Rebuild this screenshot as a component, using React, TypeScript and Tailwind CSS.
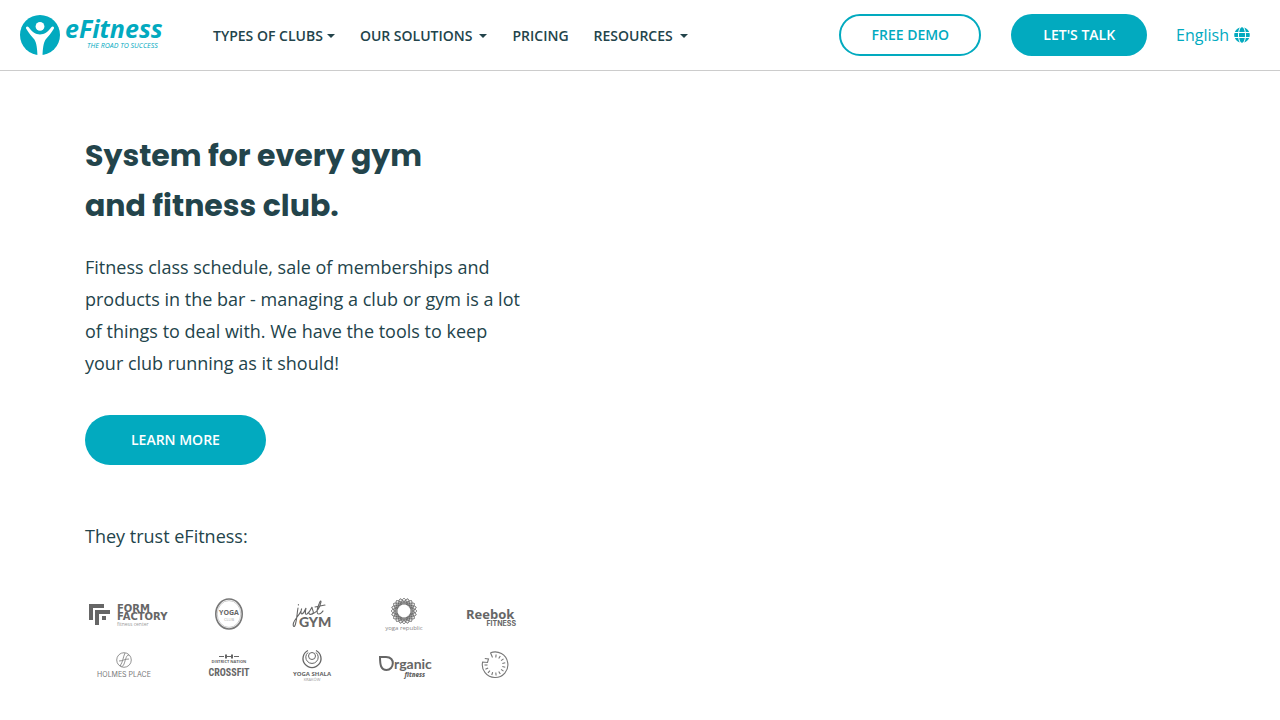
import { ReactNode } from 'react'
import { clsx } from 'clsx'
import { FaGlobe } from 'react-icons/fa'

// ─── Brand ────────────────────────────────────────────────────────────────────
function BrandLogo() {
  return (
    <svg viewBox="0 0 148 50" className="w-[148px] h-[50px]" role="img" aria-label="eFitness">
      <circle cx="20" cy="25" r="20" fill="#02aabf" />
      <circle cx="20" cy="16.4" r="4.4" fill="#fff" />
      <path
        d="M6.2 18.8C5.2 17 7.2 15.6 8.7 17.2C12.4 22.4 15.6 24.4 20 24.4C24.4 24.4 27.6 22.4 31.3 17.2C32.8 15.6 34.8 17 33.8 18.8C31.4 23 28 26.8 25.6 29.6C23.4 33 22.8 39 22.5 46H17.5C17.2 39 16.6 33 14.4 29.6C12 26.8 8.6 23 6.2 18.8Z"
        fill="#fff"
      />
      <text x="45" y="28" fill="#02aabf" fontSize="25" fontWeight="700" fontStyle="italic" fontFamily="'Open Sans', sans-serif">eFitness</text>
      <text x="67" y="38" fill="#02aabf" fontSize="7" fontStyle="italic" fontFamily="'Open Sans', sans-serif">THE ROAD TO SUCCESS</text>
    </svg>
  )
}

// ─── Header ───────────────────────────────────────────────────────────────────
interface NavItem {
  label: string
  menu?: boolean
  spaced?: boolean
}

const navItems: NavItem[] = [
  { label: 'TYPES OF CLUBS', menu: true },
  { label: 'OUR SOLUTIONS', menu: true, spaced: true },
  { label: 'PRICING' },
  { label: 'RESOURCES', menu: true, spaced: true },
]

function Caret({ className }: { className?: string }) {
  return (
    <svg viewBox="0 0 8 4" className={clsx('w-2 h-1', className)} aria-hidden="true">
      <path d="M0 0H8L4 4Z" fill="currentColor" />
    </svg>
  )
}

function Header() {
  return (
    <header className="flex items-center h-[71px] pl-5 pr-[30px] border-b border-[#cccccc]">
      <a href="#home"><BrandLogo /></a>
      <nav className="flex items-center gap-[25px] ml-[45px] pt-0.5 text-sm font-semibold text-[#23444b]">
        {navItems.map(({ label, menu, spaced }) =>
          menu ? (
            <button key={label} type="button" className="flex items-center whitespace-nowrap cursor-pointer">
              {label}
              <Caret className={spaced ? 'ml-[7px]' : 'ml-1'} />
            </button>
          ) : (
            <a key={label} href="#pricing">{label}</a>
          )
        )}
      </nav>
      <div className="flex items-center ml-auto text-sm font-semibold whitespace-nowrap">
        <a href="#demo" className="flex items-center justify-center w-[142px] h-[42px] border-2 border-[#02aabf] rounded-full text-[#02aabf]">
          FREE DEMO
        </a>
        <a href="#contact" className="flex items-center h-[42px] ml-[30px] px-8 bg-[#02aabf] rounded-full text-white">
          LET'S TALK
        </a>
        <button type="button" className="flex items-center gap-[5px] ml-[29px] text-base font-normal text-[#02aabf] cursor-pointer">
          English
          <FaGlobe className="w-4 h-4" />
        </button>
      </div>
    </header>
  )
}

// ─── Client logos ─────────────────────────────────────────────────────────────
function ClientLogo({ name, className, width, height, children }: {
  name: string; className: string; width: number; height: number; children: ReactNode
}) {
  return (
    <svg viewBox={`0 0 ${width} ${height}`} className={className} role="img" aria-label={name} fill="#666666" fontFamily="'Open Sans', sans-serif">
      {children}
    </svg>
  )
}

function FormFactory() {
  return (
    <ClientLogo name="Form Factory" className="w-[90px] h-8" width={90} height={32}>
      <path d="M3 6H18V10H7V22H3Z M9 12H24V16H13V27H9Z M16 18H20V22H16Z" />
      <g fontSize="10" fontWeight="700" fontFamily="'DejaVu Sans', sans-serif">
        <text x="31" y="14">FORM</text>
        <text x="31" y="22">FACTORY</text>
      </g>
      <text x="31" y="28" fontSize="5" fill="#999999">fitness center</text>
    </ClientLogo>
  )
}

function YogaClub() {
  return (
    <ClientLogo name="Yoga club" className="w-8 h-[34px]" width={32} height={34}>
      <ellipse cx="16" cy="17" rx="13.2" ry="15" fill="none" stroke="#777777" strokeWidth="1.6" />
      <ellipse cx="16" cy="17" rx="11.8" ry="13.4" fill="none" stroke="#aaaaaa" strokeWidth="0.6" />
      <text x="16" y="18" fontSize="7" fontWeight="700" textAnchor="middle">YOGA</text>
      <text x="16" y="24" fontSize="4" fill="#aaaaaa" textAnchor="middle">CLUB</text>
    </ClientLogo>
  )
}

function JustGym() {
  return (
    <ClientLogo name="just GYM" className="w-10 h-8" width={40} height={32}>
      <g fill="none" stroke="#666666" strokeWidth="1.1" strokeLinecap="round">
        <path d="M6 10C5 15 5 21 3.5 26C2.5 30 .5 29 1.5 25C2.5 21 7 18 9 13C10 10 9.5 10 9 13C8.5 17 11 17 13 12L14 10C13 15 13 17 15 16C18 14 19 11 20 9C20 12 23 15 20 16C18 17 17 16 17 15" />
        <path d="M20 16C26 14 28 9 29 4C29 2 28 3 27 6C25 11 24 16 27 16C29 16 30 14 31 13M23 9L33 7M6.4 6.5V7" />
      </g>
      <text x="7" y="29" fontSize="14" fontWeight="900" fontFamily="Lato, sans-serif">GYM</text>
    </ClientLogo>
  )
}

const petals = Array.from({ length: 20 }, (_, i) => i * 18)

function YogaRepublic() {
  return (
    <ClientLogo name="yoga republic" className="w-[42px] h-[34px]" width={42} height={34}>
      <g fill="none" stroke="#666666" strokeWidth="0.9">
        {petals.map(angle => (
          <g key={angle} transform={`rotate(${angle} 21 14)`}>
            <path d="M21 7.5C17.5 5 19 2.5 21 1.2C23 2.5 24.5 5 21 7.5Z" />
            <path d="M21 6.4V3.4" strokeWidth="1.2" />
          </g>
        ))}
      </g>
      <text x="21" y="33" fontSize="6" textAnchor="middle" fill="#888888">yoga republic</text>
    </ClientLogo>
  )
}

function Reebok() {
  return (
    <ClientLogo name="Reebok Fitness" className="w-[52px] h-7" width={52} height={28}>
      <text x="1" y="19" fontSize="13" fontWeight="700">Reebok</text>
      <text x="51" y="26" fontSize="7" fontWeight="700" fontFamily="Inter, sans-serif" textAnchor="end">FITNESS</text>
    </ClientLogo>
  )
}

function HolmesPlace() {
  return (
    <ClientLogo name="Holmes Place" className="w-[78px] h-7 justify-self-start" width={78} height={28}>
      <g fill="none" stroke="#888888" strokeWidth="0.9">
        <circle cx="39" cy="9" r="7.3" />
        <path d="M40 2C38 6 38 11 35 15M44 4C41 4 41 8 39 13C38 16 36 16 35 14M34 10C37 10 40 8 44 8" />
      </g>
      <text x="39" y="26" fontSize="7" textAnchor="middle" fill="#777777" fontFamily="Inter, sans-serif">HOLMES PLACE</text>
    </ClientLogo>
  )
}

function Crossfit() {
  return (
    <ClientLogo name="District Nation Crossfit" className="w-11 h-7" width={44} height={28}>
      <path d="M12 5H17V6H12Z M27 5H32V6H27Z M18 3.5H20V7.5H18Z M24 3.5H26V7.5H24Z M20 5H24V6H20Z" />
      <text x="22" y="12" fontSize="4" fontWeight="700" textAnchor="middle">DISTRICT NATION</text>
      <text x="22" y="25" fontSize="10" fontWeight="700" fontFamily="'Liberation Sans Narrow', 'Roboto Condensed', Lato, sans-serif" textAnchor="middle">CROSSFIT</text>
    </ClientLogo>
  )
}

function YogaShala() {
  return (
    <ClientLogo name="Yoga Shala" className="w-10 h-[34px]" width={40} height={34}>
      <g fill="none" stroke="#666666">
        <path d="M16 2.5A9 9 0 1 0 24 2.5" strokeWidth="1.3" />
        <path d="M16 4.5A6.2 6.2 0 1 0 24 4.5" strokeWidth="1" />
        <circle cx="20" cy="8" r="3.5" strokeWidth="1" />
      </g>
      <text x="20" y="28" fontSize="6" fontWeight="700" textAnchor="middle">YOGA SHALA</text>
      <text x="20" y="33" fontSize="4" fill="#999999" textAnchor="middle">KRAKÓW</text>
    </ClientLogo>
  )
}

function OrganicFitness() {
  return (
    <ClientLogo name="Organic fitness" className="w-14 h-7" width={56} height={28}>
      <path d="M4 6H10C20 6 18 19 10.5 19C5 19 4 14 4 6Z" fill="none" stroke="#666666" strokeWidth="2" />
      <text x="18" y="18" fontSize="14" fontWeight="700" fontFamily="Lato, sans-serif">rganic</text>
      <text x="49" y="26" fontSize="6" fontWeight="800" fontStyle="italic" textAnchor="end">fitness</text>
    </ClientLogo>
  )
}

const ticks = Array.from({ length: 12 }, (_, i) => i * 24 + 6)

function FitnessDial() {
  return (
    <ClientLogo name="Fitness club" className="w-9 h-7 justify-self-end" width={36} height={28}>
      <g fill="none" stroke="#777777" strokeWidth="1.1">
        <path d="M9.5 1.8A12.8 12.8 0 1 1 1.6 11L6.5 11.5L7.5 8L3.8 7.5" />
        <path d="M9.5 1.8L11.5 6.5" />
        {ticks.map(angle => (
          <path key={angle} d="M14 3.5V6.5" transform={`rotate(${angle} 14 14)`} />
        ))}
      </g>
    </ClientLogo>
  )
}

// ─── Page ─────────────────────────────────────────────────────────────────────
export default function App() {
  return (
    <div className="min-h-screen bg-white font-['Open_Sans',sans-serif] text-[#23444b]">
      <Header />
      <main className="max-w-[1140px] mx-auto px-[15px] pt-[60px]">
        <section className="max-w-[445px]">
          <h1 className="font-['Poppins','Inter',sans-serif] text-[30px] leading-[50px] font-bold">
            System for every gym<br />and fitness club.
          </h1>
          <p className="mt-5 text-lg leading-8">
            Fitness class schedule, sale of memberships and products in the bar - managing a club or gym is a lot of
            things to deal with. We have the tools to keep your club running as it should!
          </p>
          <a href="#more" className="inline-flex items-center h-[50px] mt-9 px-[46px] bg-[#02aabf] rounded-full text-sm font-semibold text-white">
            LEARN MORE
          </a>
          <p className="mt-[55px] text-lg leading-8">They trust eFitness:</p>
          <div className="grid grid-cols-[92px_104px_62px_122px_52px] grid-rows-[52px_50px] items-center justify-items-center mt-9">
            <FormFactory />
            <YogaClub />
            <JustGym />
            <YogaRepublic />
            <Reebok />
            <HolmesPlace />
            <Crossfit />
            <YogaShala />
            <OrganicFitness />
            <FitnessDial />
          </div>
        </section>
      </main>
    </div>
  )
}
